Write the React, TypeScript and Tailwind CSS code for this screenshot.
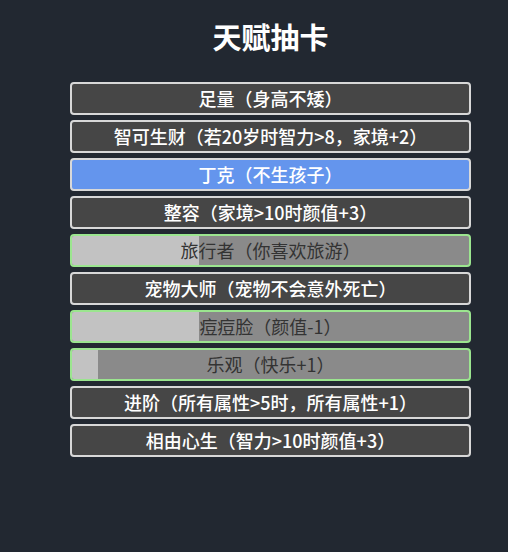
import React from 'react';

type Talent = {
  text: string;
  state: 'idle' | 'selected' | 'loading';
  progress?: number;
};

const talents: Talent[] = [
  { text: '足量（身高不矮）', state: 'idle' },
  { text: '智可生财（若20岁时智力>8，家境+2）', state: 'idle' },
  { text: '丁克（不生孩子）', state: 'selected' },
  { text: '整容（家境>10时颜值+3）', state: 'idle' },
  { text: '旅行者（你喜欢旅游）', state: 'loading', progress: 32 },
  { text: '宠物大师（宠物不会意外死亡）', state: 'idle' },
  { text: '痘痘脸（颜值-1）', state: 'loading', progress: 32 },
  { text: '乐观（快乐+1）', state: 'loading', progress: 6.5 },
  { text: '进阶（所有属性>5时，所有属性+1）', state: 'idle' },
  { text: '相由心生（智力>10时颜值+3）', state: 'idle' },
];

function TalentRow({ talent }: { talent: Talent }) {
  if (talent.state === 'loading') {
    return (
      <li className="relative h-[33px] rounded-[4px] border-2 border-[#9be58f] bg-[#8a8a8a] overflow-hidden flex items-center justify-center">
        {/* fill bar */}
        <div
          className="absolute left-0 top-0 bottom-0 bg-[#c2c2c2]"
          style={{ width: `${talent.progress}%` }}
        />
        <span className="relative text-[18px] text-[#333333]">{talent.text}</span>
      </li>
    );
  }

  const bg = talent.state === 'selected' ? 'bg-[#6495ed]' : 'bg-[#464646]';
  return (
    <li
      className={`h-[33px] rounded-[4px] border-2 border-[#d8d8d8] ${bg} flex items-center justify-center`}
    >
      <span className="text-[18px] font-medium text-white">{talent.text}</span>
    </li>
  );
}

export default function App() {
  return (
    <div
      className="min-h-screen bg-[#222831] pl-[33px] flex flex-col items-center"
      style={{ fontFamily: '"Noto Sans CJK SC", "Noto Sans", sans-serif' }}
    >
      <h1 className="mt-[16px] h-[40px] text-[29px] leading-[40px] font-bold text-white">天赋抽卡</h1>
      <ul className="mt-[26px] w-[401px] flex flex-col gap-[5px]">
        {talents.map((t) => (
          <TalentRow key={t.text} talent={t} />
        ))}
      </ul>
    </div>
  );
}
